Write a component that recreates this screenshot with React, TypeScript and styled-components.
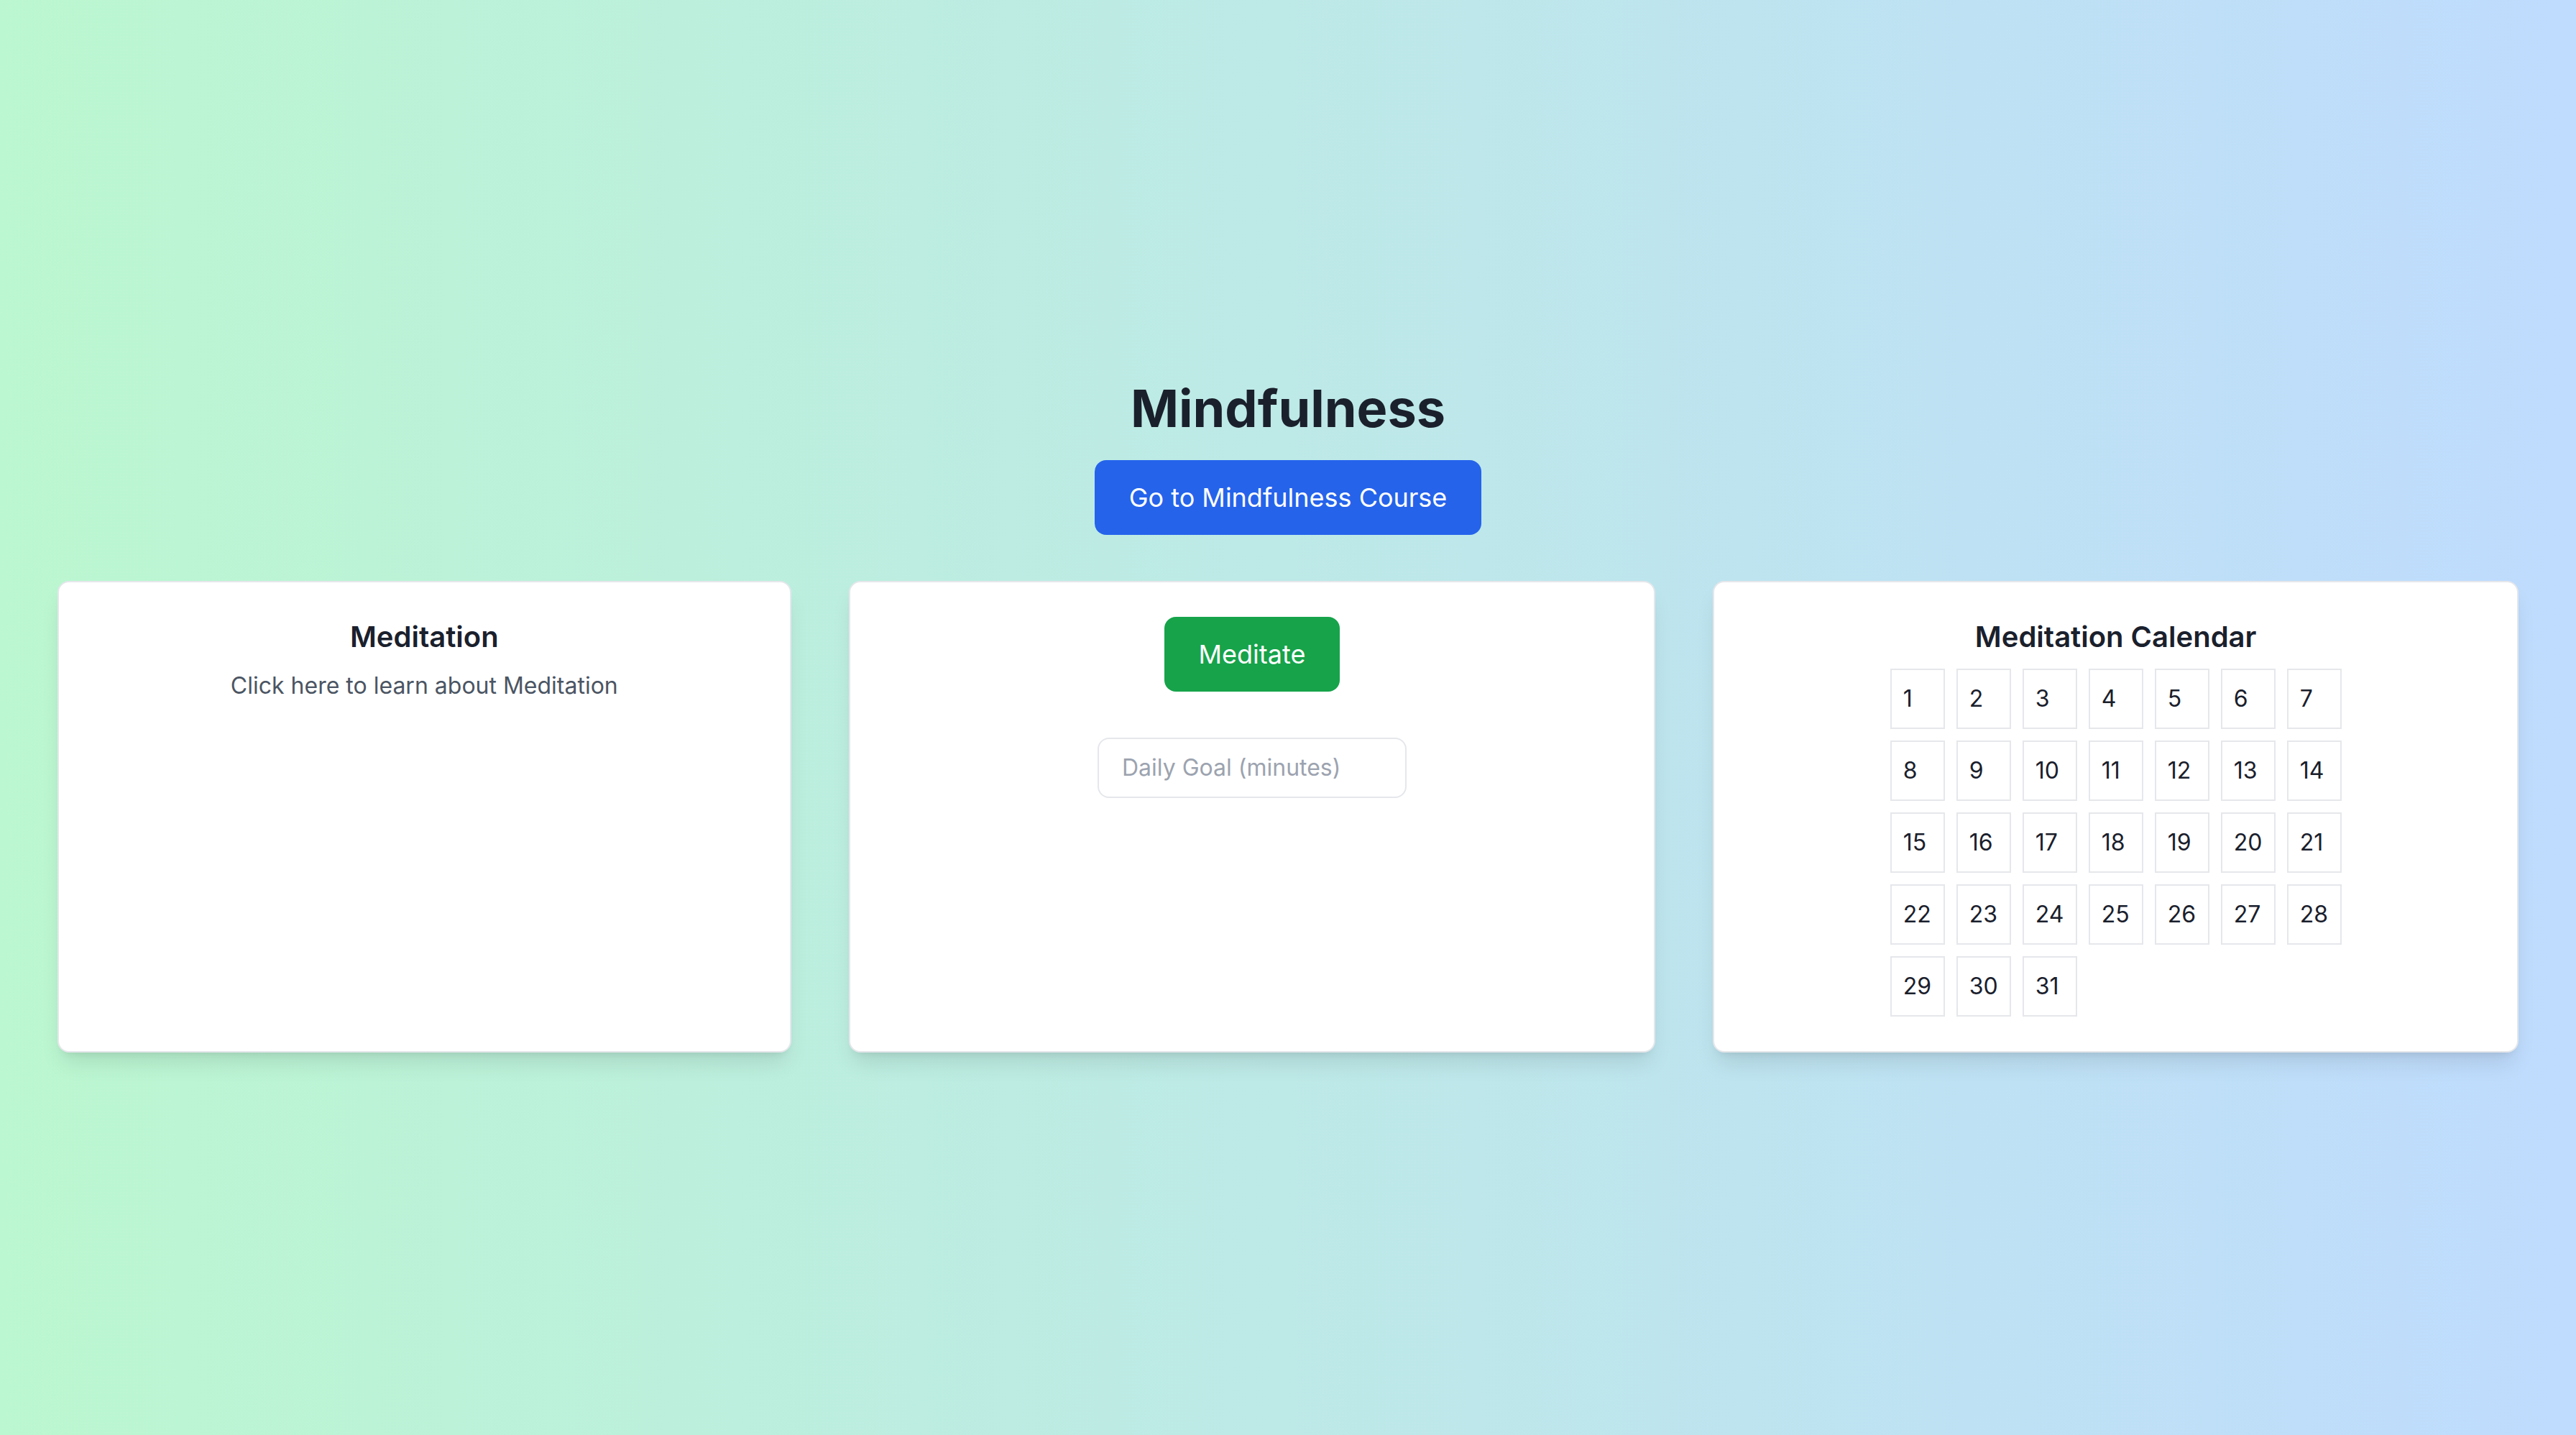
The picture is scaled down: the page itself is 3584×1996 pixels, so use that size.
import styled, { createGlobalStyle } from "styled-components"

const GlobalStyle = createGlobalStyle`
	* {
		box-sizing: border-box;
	}
	html,
	body {
		margin: 0;
		padding: 0;
	}
	body {
		font-family: Inter, "Noto Sans", "Liberation Sans", sans-serif;
		color: #1a202c;
	}
`

const Page = styled.main`
	min-height: 100vh;
	display: flex;
	flex-direction: column;
	align-items: center;
	justify-content: center;
	padding: 0 80px 4px;
	background: linear-gradient(to right, #bbf7d0, #bfdbfe);
`

const Title = styled.h1`
	margin: 0 0 32px;
	font-size: 72px;
	line-height: 80px;
	font-weight: 700;
	color: #1a202c;
`

const Button = styled.button<{ $tone: "blue" | "green" }>`
	border: none;
	border-radius: 16px;
	padding: 24px 48px;
	font-family: inherit;
	font-size: 36px;
	line-height: 56px;
	color: #ffffff;
	cursor: pointer;
	background: ${(p) => (p.$tone === "blue" ? "#2563eb" : "#16a34a")};
`

const CourseButton = styled(Button)`
	margin-bottom: 64px;
`

const Cards = styled.section`
	width: 100%;
	display: grid;
	grid-template-columns: 1020fr 1122fr 1120fr;
	gap: 80px;
`

const Card = styled.div`
	display: flex;
	flex-direction: column;
	align-items: center;
	padding: 48px;
	background: #ffffff;
	border: 2px solid #e5e7eb;
	border-radius: 16px;
	box-shadow: 0 20px 30px -6px rgba(0, 0, 0, 0.1), 0 8px 12px -8px rgba(0, 0, 0, 0.1);
`

const CardTitle = styled.h2`
	margin: 0 0 16px;
	font-size: 40px;
	line-height: 56px;
	font-weight: 600;
	color: #1a202c;
`

const CardText = styled.p`
	margin: 0;
	font-size: 32px;
	line-height: 48px;
	color: #4b5563;
	cursor: pointer;
`

const GoalInput = styled.input`
	margin-top: 64px;
	width: 430px;
	padding: 16px 32px;
	border: 2px solid #e5e7eb;
	border-radius: 16px;
	font-family: inherit;
	font-size: 32px;
	line-height: 48px;
	color: #1a202c;
	outline: none;

	&::placeholder {
		color: #9ca3af;
	}
`

const CalendarGrid = styled.div`
	display: grid;
	grid-template-columns: repeat(7, 76px);
	gap: 16px;
`

const Day = styled.div`
	height: 84px;
	padding: 16px;
	border: 2px solid #e5e7eb;
	font-size: 32px;
	line-height: 48px;
	color: #1a202c;
`

const DAYS = Array.from({ length: 31 }, (_, i) => i + 1)

export default function App() {
	return (
		<>
			<GlobalStyle />
			<Page>
				<Title>Mindfulness</Title>
				<CourseButton $tone="blue">Go to Mindfulness Course</CourseButton>
				<Cards>
					<Card>
						<CardTitle>Meditation</CardTitle>
						<CardText>Click here to learn about Meditation</CardText>
					</Card>
					<Card>
						<Button $tone="green">Meditate</Button>
						<GoalInput type="number" placeholder="Daily Goal (minutes)" />
					</Card>
					<Card>
						<CardTitle>Meditation Calendar</CardTitle>
						<CalendarGrid>
							{DAYS.map((day) => (
								<Day key={day}>{day}</Day>
							))}
						</CalendarGrid>
					</Card>
				</Cards>
			</Page>
		</>
	)
}
